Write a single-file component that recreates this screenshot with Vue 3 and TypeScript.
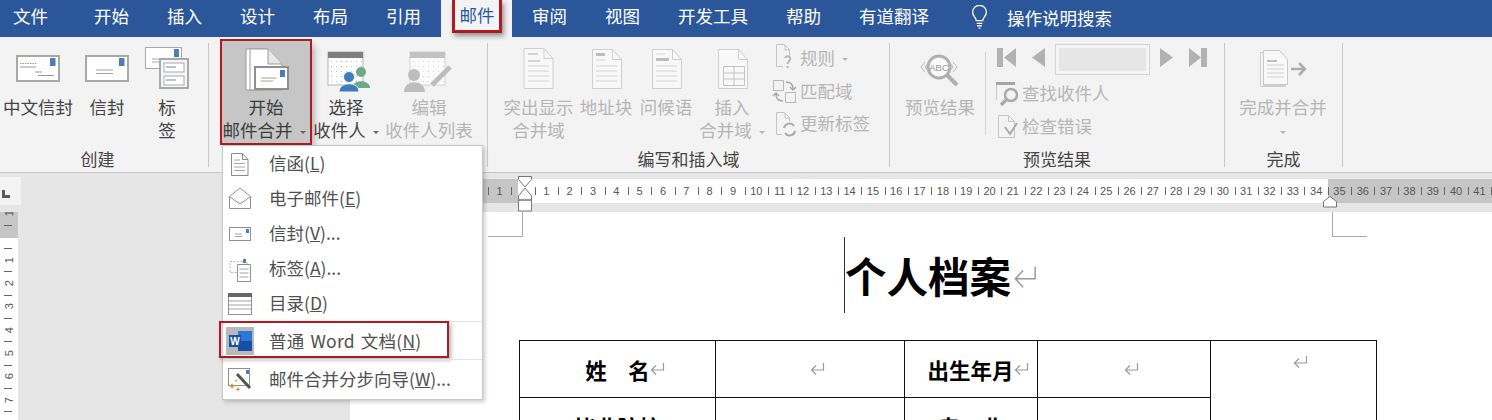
<script setup lang="ts">
const tabs = ['开始', '插入', '设计', '布局', '引用']
const tabs2 = ['审阅', '视图', '开发工具', '帮助', '有道翻译']
const hLabels: string[] = ['1', '']
for (let i = 1; i <= 41; i++) hLabels.push(String(i))
hLabels.push('')
const vLabels: string[] = ['1', '', '1', '2', '3', '4', '5', '6', '7', '8']
const dots: { x: number; y: number }[] = []
for (let r = 0; r < 5; r++) for (let c = 0; c < 7; c++) dots.push({ x: c * 5, y: r * 5 })
</script>

<template>
  <div class="app">
    <div class="tabs">
      <div class="tab first">文件</div>
      <div v-for="t in tabs" :key="t" class="tab">{{ t }}</div>
      <div class="tab active"><span class="redtab">邮件</span></div>
      <div v-for="t in tabs2" :key="t" class="tab">{{ t }}</div>
      <svg class="bulb" width="17" height="24" viewBox="0 0 18 26" fill="none" stroke="#fff" stroke-width="1.4">
        <path d="M5.5 17c0-3-4-5-4-9.300a7.500 7.300 0 0 1 15 0c0 4.300-4 6.300-4 9.300z" />
        <path d="M6 20h6M6.500 22.500h5M8 25h2" />
      </svg>
      <div class="search">操作说明搜索</div>
    </div>

    <div class="ribbon">
      <div class="group g1">
        <div class="body">
          <div class="btn w76">
            <svg width="76" height="54" viewBox="0 41 76 54">
              <rect x="17" y="56" width="42" height="25" fill="#fff" stroke="#a9a9a9" stroke-width="2" />
              <rect x="50" y="58" width="5.500" height="8" fill="#4a7ebb" />
              <path d="M20 63.500h17" stroke="#c98a7a" stroke-dasharray="1.500 1" />
              <path d="M20 67h16M35 72h7M38 75.500h16" stroke="#9a9a9a" />
            </svg>
            <div class="t">中文信封</div>
          </div>
          <div class="btn w62">
            <svg width="62" height="54" viewBox="76 41 62 54">
              <rect x="86" y="56" width="42" height="25" fill="#fff" stroke="#a9a9a9" stroke-width="2" />
              <rect x="119" y="58" width="5.500" height="8" fill="#4a7ebb" />
              <path d="M96 70h17M96 73.500h17" stroke="#a5a5a5" />
            </svg>
            <div class="t">信封</div>
          </div>
          <div class="btn w58">
            <svg width="58" height="54" viewBox="138 41 58 54">
              <rect x="145.500" y="47.500" width="36" height="21" fill="#fff" stroke="#a9a9a9" />
              <rect x="174" y="49" width="5" height="8" fill="#4a7ebb" />
              <path d="M152 59h8M152 62h8" stroke="#aaa" />
              <rect x="160" y="59" width="28" height="29" fill="#f6f6f6" stroke="#a9a9a9" stroke-width="2" />
              <rect x="164" y="63" width="20" height="9" fill="#fff" stroke="#a9a9a9" />
              <rect x="164" y="76" width="20" height="9" fill="#fff" stroke="#a9a9a9" />
              <path d="M166 67h10M166 80h10" stroke="#5b8cc4" />
            </svg>
            <div class="t">标<br />签</div>
          </div>
        </div>
        <div class="label pr13">创建</div>
      </div>
      <div class="sep"></div>

      <div class="group g2">
        <div class="body pl13">
          <div class="btn w88 pressed">
            <svg width="88" height="54" viewBox="222 41 88 54">
              <path d="M246 49h18v41h-18z" fill="#fff" stroke="#9b9b9b" />
              <path d="M250 49h18l14 15v26h-32z" fill="#fff" stroke="#9b9b9b" />
              <path d="M268 49v15h14" fill="#e8e8e8" stroke="#9b9b9b" />
              <rect x="255" y="67" width="33" height="22" fill="#fff" stroke="#8f8f8f" stroke-width="2" />
              <rect x="280" y="70" width="5" height="7" fill="#4a7ebb" />
              <path d="M261 78h15M261 81h12" stroke="#b99a84" />
            </svg>
            <div class="t">开始</div>
            <div class="t">邮件合并<i class="caret shifted"></i></div>
          </div>
          <div class="btn w72">
            <svg width="72" height="54" viewBox="310 41 72 54">
              <rect x="328" y="52" width="35" height="33" fill="#fff" stroke="#b5b5b5" />
              <rect x="328" y="52" width="35" height="6" fill="#7f7f7f" />
              <g fill="#b9b9b9">
                <rect v-for="d in dots" :key="d.x + '-' + d.y" :x="331 + d.x" :y="61 + d.y" width="1" height="1" />
              </g>
              <circle cx="361" cy="72" r="5" fill="#6ea98c" />
              <path d="M352 88c0-9 18-9 18 0z" fill="#6ea98c" />
              <circle cx="349" cy="77" r="5.500" fill="#3e7cbd" stroke="#f3f3f3" />
              <path d="M339 92c0-11 20-11 20 0z" fill="#3e7cbd" stroke="#f3f3f3" />
            </svg>
            <div class="t">选择</div>
            <div class="t">收件人<i class="caret"></i></div>
          </div>
          <div class="btn w94 off">
            <svg width="94" height="54" viewBox="382 41 94 54">
              <rect x="410" y="52" width="35" height="33" fill="#fbfbfb" stroke="#d6d6d6" />
              <rect x="410" y="52" width="35" height="6" fill="#c2c2c2" />
              <g fill="#d6d6d6">
                <rect v-for="d in dots" :key="d.x + '_' + d.y" :x="413 + d.x" :y="61 + d.y" width="1" height="1" />
              </g>
              <circle cx="414" cy="75" r="6" fill="#bdbdbd" />
              <path d="M404 92c0-13 21-13 21 0z" fill="#bdbdbd" />
              <path d="M432 85l18-18" stroke="#bdbdbd" stroke-width="5" />
            </svg>
            <div class="t">编辑</div>
            <div class="t">收件人列表</div>
          </div>
        </div>
        <div class="label"></div>
      </div>
      <div class="sep"></div>

      <div class="group g3">
        <div class="body pl13">
          <div class="btn w75 off">
            <svg width="75" height="54" viewBox="501 41 75 54">
              <path d="M524 48.500h20l9 10v30h-29z" fill="#f8f8f8" stroke="#cfcfcf" />
              <path d="M544 48.500v10h9" fill="none" stroke="#cfcfcf" />
              <path d="M528 53h10v2h-10z" fill="#d5d5d5" />
              <path d="M528 60h12v2h-12z" fill="#d5d5d5" />
              <path d="M528 66h21M528 71h21M528 76h21M528 81h21" stroke="#d5d5d5" />
            </svg>
            <div class="t">突出显示</div>
            <div class="t">合并域</div>
          </div>
          <div class="btn w60 off">
            <svg width="60" height="54" viewBox="576 41 60 54">
              <path d="M592.500 49.500h20l9 10v29h-29z" fill="#f8f8f8" stroke="#cfcfcf" />
              <path d="M612.500 49.500v10h9" fill="none" stroke="#cfcfcf" />
              <rect x="596" y="53" width="9" height="3" fill="#bdbdbd" />
              <path d="M596 60h9M596 66h21M596 71h21M596 76h21M596 81h21" stroke="#d5d5d5" />
            </svg>
            <div class="t">地址块</div>
          </div>
          <div class="btn w60 off">
            <svg width="60" height="54" viewBox="636 41 60 54">
              <path d="M652.500 49.500h20l9 10v29h-29z" fill="#f8f8f8" stroke="#cfcfcf" />
              <path d="M672.500 49.500v10h9" fill="none" stroke="#cfcfcf" />
              <path d="M656 54h9" stroke="#d5d5d5" />
              <rect x="656" y="58" width="13" height="3" fill="#bdbdbd" />
              <path d="M656 66h21M656 71h21M656 76h21M656 81h21" stroke="#d5d5d5" />
            </svg>
            <div class="t">问候语</div>
          </div>
          <div class="btn w72 off">
            <svg width="72" height="54" viewBox="696 41 72 54">
              <path d="M718.500 49.500h20l9 10v29h-29z" fill="#f8f8f8" stroke="#cfcfcf" />
              <path d="M738.500 49.500v10h9" fill="none" stroke="#cfcfcf" />
              <path d="M723.500 66.500h21v19h-21zM723.500 73h21M723.500 79h21M734 66.500v19" fill="none" stroke="#c4c4c4" />
            </svg>
            <div class="t">插入</div>
            <div class="t">合并域<i class="caret"></i></div>
          </div>
          <div class="smallcol off">
            <div class="srow">
              <svg width="32" height="32" viewBox="768 43 32 32" fill="none" stroke="#c4c4c4">
                <path d="M783 66.500h-6.500v-22h8l5 5v8M785 45v5h5" />
                <path d="M785 58c1-3 6-2 5 1.500-.5 2-2.500 2-2.500 4.500M787.500 66v2" stroke="#b8b8b8" stroke-width="2" />
              </svg>
              <span>规则</span><i class="caret"></i>
            </div>
            <div class="srow">
              <svg width="32" height="32" viewBox="768 75 32 32" fill="none" stroke="#bbb">
                <rect x="773.500" y="79.500" width="10" height="10" />
                <rect x="785.500" y="91.500" width="10" height="10" />
                <path d="M786 81c4 0 7 2 7 7M790 86l3 3 3-3M783 100c-4 0-7-2-7-7M773 95l3-3 3 3" stroke="#aaa" stroke-width="1.500" />
              </svg>
              <span>匹配域</span>
            </div>
            <div class="srow">
              <svg width="32" height="32" viewBox="768 108 32 32" fill="none" stroke="#c4c4c4">
                <path d="M782 134.500h-5.500v-22h8l5 5v4M785 113v5h5" />
                <path d="M784 128a5.500 5.500 0 0 1 10-2M795 131a5.500 5.500 0 0 1-10 2" stroke="#aaa" stroke-width="2" />
              </svg>
              <span>更新标签</span>
            </div>
          </div>
        </div>
        <div class="label">编写和插入域</div>
      </div>
      <div class="sep"></div>

      <div class="group g4">
        <div class="body pl10">
          <div class="btn w80 off">
            <svg width="80" height="54" viewBox="900 41 80 54">
              <circle cx="939" cy="67" r="11" fill="#fafafa" stroke="#b0b0b0" stroke-width="3" />
              <path d="M947 75l10 10" stroke="#b0b0b0" stroke-width="4" />
              <path d="M925 62l-4 5 4 5M929 62l-4 5 4 5M949 62l4 5-4 5M953 62l4 5-4 5" fill="none" stroke="#b9b9b9" />
              <text x="939" y="70.500" text-anchor="middle" class="abc">ABC</text>
            </svg>
            <div class="t">预览结果</div>
          </div>
          <div class="innersep"></div>
          <div class="navcol off">
            <div class="nav">
              <svg width="62" height="36" viewBox="990 41 62 36" fill="#b2b2b2">
                <rect x="997" y="48" width="6" height="19" />
                <path d="M1016 48v19l-12-9.500zM1045 48v19l-13-9.500z" />
              </svg>
              <div class="field"></div>
              <svg width="62" height="36" viewBox="1153 41 62 36" fill="#b2b2b2">
                <path d="M1160 48v19l13-9.500zM1189 48v19l12-9.500z" />
                <rect x="1201" y="48" width="6" height="19" />
              </svg>
            </div>
            <div class="nrow r34">
              <svg width="32" height="34" viewBox="990 77 32 34" fill="none">
                <path d="M996.500 85v15" stroke="#c9c9c9" />
                <rect x="996" y="82" width="19" height="3" fill="#a5a5a5" />
                <circle cx="1011" cy="95" r="6" stroke="#aaa" stroke-width="2.500" />
                <path d="M1006 100l-5 5" stroke="#aaa" stroke-width="3.500" />
              </svg>
              <span>查找收件人</span>
            </div>
            <div class="nrow r32">
              <svg width="32" height="32" viewBox="990 111 32 32" fill="none" stroke="#c4c4c4">
                <path d="M998.500 115.500h10l6 6v16h-16zM1008.500 115.500v6h6" />
                <path d="M1005 127l5 7 7-11" stroke="#aaa" stroke-width="2" />
              </svg>
              <span>检查错误</span>
            </div>
          </div>
        </div>
        <div class="label">预览结果</div>
      </div>
      <div class="sep"></div>

      <div class="group g5">
        <div class="body pl7">
          <div class="btn w102 off">
            <svg width="102" height="54" viewBox="1232 41 102 54">
              <path d="M1260.500 52.500h3v33h22v1h-25z" fill="#f5f5f5" stroke="#cfcfcf" />
              <path d="M1263.500 50.500h16l8 9v25h-24z" fill="#f8f8f8" stroke="#c9c9c9" />
              <rect x="1267" y="60" width="10" height="2" fill="#bdbdbd" />
              <path d="M1267 65h17M1267 69h17M1267 73h17M1267 77h17" stroke="#d0d0d0" />
              <path d="M1291 69h13M1299 63l6 6-6 6" fill="none" stroke="#adadad" stroke-width="2.500" />
            </svg>
            <div class="t">完成并合并</div>
            <div class="t"><i class="caret alone"></i></div>
          </div>
        </div>
        <div class="label">完成</div>
      </div>
      <div class="sep"></div>
    </div>

    <div class="lower">
      <div class="leftcol">
        <div class="corner"><i class="lmark"></i></div>
        <div class="vruler">
          <div class="vcells">
            <div v-for="(n, i) in vLabels" :key="i" class="vcell"><span>{{ n }}</span></div>
          </div>
        </div>
      </div>

      <div class="docol">
        <div class="band">
          <div class="ruler">
            <div v-for="(n, i) in hLabels" :key="i" class="hcell">{{ n }}</div>
          </div>
          <svg class="marker ml" width="16" height="36" viewBox="0 0 16 36" fill="#fff" stroke="#777">
            <path d="M1.500 .5h13v3L8 11 1.500 3.500z" />
            <path d="M8 12l6.500 8v4h-13v-4zM1.500 24h13v11h-13z" />
          </svg>
          <svg class="marker mr" width="16" height="12" viewBox="0 0 16 12" fill="#fff" stroke="#777">
            <path d="M8 .5l6.500 5v5.500h-13v-5.500z" />
          </svg>
        </div>
        <div class="page">
          <div class="crops"><i class="crop cl"></i><i class="crop cr"></i></div>
          <div class="titlerow">
            <i class="cursor"></i>
            <span class="title">个人档案</span>
            <svg class="retbig" width="24" height="24" viewBox="0 0 26 24" fill="none" stroke="#9a9a9a" stroke-width="1.600">
              <path d="M24 1v13H3M11 5l-8.500 9 8.500 9" />
            </svg>
          </div>
          <table class="tbl">
            <colgroup>
              <col class="c1" /><col class="c2" /><col class="c3" /><col class="c4" /><col class="c5" />
            </colgroup>
            <tbody>
              <tr>
                <th class="pad15">姓　名<svg class="ret" width="15" height="14" viewBox="0 0 15 14"><path d="M13.500 1v7H2M6 3.500 1.500 8 6 12.500" /></svg></th>
                <td class="pad14"><svg class="ret" width="15" height="14" viewBox="0 0 15 14"><path d="M13.500 1v7H2M6 3.500 1.500 8 6 12.500" /></svg></td>
                <th class="pad14">出生年月<svg class="ret" width="15" height="14" viewBox="0 0 15 14"><path d="M13.500 1v7H2M6 3.500 1.500 8 6 12.500" /></svg></th>
                <td class="pad14"><svg class="ret" width="15" height="14" viewBox="0 0 15 14"><path d="M13.500 1v7H2M6 3.500 1.500 8 6 12.500" /></svg></td>
                <td rowspan="2" class="photo"><svg class="ret" width="15" height="14" viewBox="0 0 15 14"><path d="M13.500 1v7H2M6 3.500 1.500 8 6 12.500" /></svg></td>
              </tr>
              <tr>
                <th>毕业院校</th>
                <td></td>
                <th>专　业</th>
                <td></td>
              </tr>
            </tbody>
          </table>
        </div>
      </div>
    </div>

    <div class="menu">
      <div class="item">
        <svg width="28" height="28" viewBox="0 0 28 28" fill="none" stroke="#8a8a8a">
          <path d="M5.500 3.500h11l5.500 6v16h-16.500zM16.500 3.500v6h5.500" fill="#fff" />
          <path d="M8 10h6M8 13.500h11M8 17h11M8 20.500h11" stroke="#a5a5a5" />
        </svg>
        <span>信函(<u>L</u>)</span>
      </div>
      <div class="item">
        <svg width="28" height="28" viewBox="0 0 28 28" fill="#fff" stroke="#8f8f8f">
          <path d="M3.500 11.500L14 3l10.500 8.500v12h-21z" />
          <path d="M3.500 11.500L14 19l10.500-7.500" />
        </svg>
        <span>电子邮件(<u>E</u>)</span>
      </div>
      <div class="item">
        <svg width="28" height="28" viewBox="0 0 28 28" fill="#fff" stroke="#8f8f8f">
          <rect x="3.500" y="7.500" width="21" height="13" />
          <rect x="20" y="9" width="3" height="4" fill="#4a7ebb" stroke="none" />
          <path d="M9 14h7M9 16.500h7" stroke="#a5a5a5" />
        </svg>
        <span>信封(<u>V</u>)...</span>
      </div>
      <div class="item">
        <svg width="28" height="28" viewBox="0 0 28 28" fill="#fff" stroke="#8f8f8f">
          <path d="M4 6.500h17v11H4z" stroke="#b5b5b5" stroke-dasharray="2 1.500" />
          <path d="M11.500 9.500h13v17h-13z" />
          <rect x="17" y="4" width="3" height="4" fill="#4a7ebb" stroke="none" />
          <path d="M13.500 14h9M13.500 18h9M13.500 22h9" stroke="#a5a5a5" />
        </svg>
        <span>标签(<u>A</u>)...</span>
      </div>
      <div class="item">
        <svg width="28" height="28" viewBox="0 0 28 28" fill="#fff" stroke="#8f8f8f">
          <rect x="2.500" y="3.500" width="23" height="21" />
          <rect x="2" y="3" width="24" height="4" fill="#666" stroke="none" />
          <path d="M3 11h22M3 15h22M3 19h22" stroke="#a5a5a5" />
        </svg>
        <span>目录(<u>D</u>)</span>
      </div>
      <div class="item tall divided">
        <svg width="28" height="28" viewBox="0 0 28 28">
          <rect width="28" height="28" fill="#b9b9b9" />
          <rect x="12" y="4" width="14" height="20" fill="#2a78d4" />
          <rect x="12" y="14" width="14" height="10" fill="#1650a5" />
          <rect x="3" y="8" width="12" height="12" fill="#1d4fa6" />
          <text x="9" y="17.500" text-anchor="middle" class="wordw">W</text>
        </svg>
        <span class="wide">普通 Word 文档(<u>N</u>)</span>
        <i class="redbox"></i>
      </div>
      <div class="item tall divided">
        <svg width="28" height="28" viewBox="0 0 28 28" fill="#fff" stroke="#8f8f8f">
          <rect x="2.500" y="3.500" width="21" height="17" />
          <rect x="20" y="5" width="3" height="4" fill="#4a7ebb" stroke="none" />
          <path d="M11 9l13 14" stroke="#555" stroke-width="3" />
          <path d="M6 18l1 2 2 1-2 1-1 2-1-2-2-1 2-1zM12 22l.7 1.500 1.500.7-1.500.7-.7 1.500-.7-1.500-1.500-.7 1.500-.7zM10 14l.5 1.200 1.200.5-1.200.5-.5 1.200-.5-1.200-1.200-.5 1.200-.5z" fill="#e2893a" stroke="none" />
        </svg>
        <span>邮件合并分步向导(<u>W</u>)...</span>
      </div>
    </div>
  </div>
</template>

<style scoped>
.app {
  position: relative;
  width: 1492px;
  height: 420px;
  overflow: hidden;
  background: #e6e6e6;
  font-family: "Noto Sans CJK SC", "Liberation Sans", sans-serif;
  font-size: 17.5px;
  color: #444;
}
.tabs {
  display: flex;
  align-items: center;
  height: 37px;
  background: #2b579a;
  color: #fff;
}
.tab {
  padding: 0 19px;
  line-height: 31px;
  height: 37px;
  white-space: nowrap;
}
.tab.first {
  padding: 0 27px 0 13px;
}
.tab.active {
  width: 71px;
  padding: 0;
  background: #f3f3f3;
  box-sizing: border-box;
  padding-left: 11px;
  margin-left: 1px;
  margin-right: 1px;
  color: #2b579a;
}
.redtab {
  display: block;
  width: 50px;
  height: 33px;
  box-sizing: border-box;
  border: 3px solid #b01a22;
  border-top: 0;
  text-align: center;
  line-height: 29px;
  box-shadow: 2px 3px 5px rgba(0, 0, 0, 0.4);
}
.bulb {
  margin: 0 0 3px 23px;
  flex: none;
}
.search {
  margin: 0 0 3px 19px;
  white-space: nowrap;
}
.ribbon {
  display: flex;
  height: 136px;
  box-sizing: border-box;
  background: #f3f3f3;
  border-bottom: 1px solid #c8c8c8;
}
.sep {
  width: 1px;
  height: 124px;
  margin-top: 6px;
  background: #c9c9c9;
}
.group {
  display: flex;
  flex-direction: column;
  padding-top: 4px;
  flex: none;
}
.g1 { width: 208px; }
.g2 { width: 278px; }
.g3 { width: 401px; }
.g4 { width: 334px; }
.g5 { width: 117px; }
.body {
  display: flex;
  height: 102px;
}
.pl13 { padding-left: 13px; }
.pl10 { padding-left: 10px; }
.pl7 { padding-left: 7px; }
.label {
  margin-top: 4px;
  height: 23px;
  line-height: 23px;
  text-align: center;
  font-size: 17px;
}
.pr13 { padding-right: 13px; }
.btn {
  flex: none;
  text-align: center;
  white-space: nowrap;
}
.btn svg { display: block; }
.t {
  line-height: 23px;
  height: 23px;
}
.w58 { width: 58px; }
.w60 { width: 60px; }
.w62 { width: 62px; }
.w72 { width: 72px; }
.w75 { width: 75px; }
.w76 { width: 76px; }
.w80 { width: 80px; }
.w88 { width: 88px; }
.w94 { width: 94px; }
.w102 { width: 102px; }
.off { color: #b6b6b6; }
.pressed {
  background: #c6c6c6;
  outline: 2.5px solid #b01a22;
  outline-offset: 0;
  box-shadow: 4px 4px 7px rgba(0, 0, 0, 0.3);
  color: #3c3c3c;
}
.caret {
  display: inline-block;
  width: 0;
  height: 0;
  margin-left: 7px;
  vertical-align: middle;
  border-left: 3px solid transparent;
  border-right: 3px solid transparent;
  border-top: 3px solid #6a6a6a;
}
.caret.shifted { margin-right: 4px; }
.off .caret { border-top-color: #b6b6b6; }
.caret.alone { margin-left: 0; }
.smallcol {
  margin-top: 2px;
  flex: none;
}
.srow {
  display: flex;
  align-items: center;
  height: 32.500px;
  white-space: nowrap;
}
.srow span,
.nrow span {
  margin-bottom: 3px;
}
.innersep {
  width: 1px;
  height: 83px;
  margin: 11px 4px 0 5px;
  background: #d5d5d5;
}
.nav {
  display: flex;
  height: 36px;
}
.field {
  width: 93px;
  height: 29px;
  margin: 4px 4px 0;
  box-sizing: border-box;
  background: #e6e6e6;
  border: 3px solid #f5f5f5;
  outline: 1px solid #d4d4d4;
  outline-offset: 0;
}
.nrow {
  display: flex;
  align-items: center;
  white-space: nowrap;
}
.r34 { height: 34px; }
.r32 { height: 32px; }
.abc {
  font-family: "Liberation Sans", sans-serif;
  font-size: 9.500px;
  fill: #969696;
}
.lower {
  display: flex;
  height: 247px;
}
.leftcol {
  width: 350px;
  flex: none;
  padding-top: 4px;
}
.corner {
  display: flex;
  align-items: flex-end;
  width: 21px;
  height: 28px;
  padding: 0 0 7px 2px;
  box-sizing: border-box;
  background: #f3f3f3;
}
.lmark {
  width: 8px;
  height: 8px;
  box-sizing: border-box;
  border-left: 3px solid #5a5a5a;
  border-bottom: 3px solid #5a5a5a;
}
.vruler {
  width: 18px;
  height: 208px;
  margin-top: 7px;
  overflow: hidden;
  background: linear-gradient(180deg, #c6c6c6 26px, #fff 26px);
}
.vcells {
  margin-top: -10.700px;
}
.vcell {
  display: flex;
  align-items: center;
  justify-content: center;
  height: 23.330px;
  background: linear-gradient(#666, #666) no-repeat 4px 0 / 8px 1px;
}
.vcell span {
  font-family: "Liberation Sans", sans-serif;
  font-size: 11px;
  line-height: 12px;
  color: #555;
  writing-mode: vertical-rl;
  transform: rotate(180deg);
}
.docol {
  position: relative;
  flex: 1;
  min-width: 0;
  display: flex;
  flex-direction: column;
}
.band {
  padding: 6px 0 9px;
  background: #e6e6e6;
}
.ruler {
  display: flex;
  height: 24px;
  padding-left: 138px;
  background: linear-gradient(90deg, #c6c6c6 168px, #fff 168px, #fff 978px, #c6c6c6 978px);
  overflow: hidden;
}
.hcell {
  flex: none;
  width: 23.330px;
  text-align: center;
  font-family: "Liberation Sans", sans-serif;
  font-size: 11px;
  line-height: 24px;
  color: #555;
  background: linear-gradient(#666, #666) no-repeat 0 center / 1px 8px;
}
.marker {
  position: absolute;
}
.ml {
  left: 167px;
  top: 3px;
}
.mr {
  left: 972px;
  top: 23px;
}
.page {
  flex: 1;
  background: #fff;
  overflow: hidden;
}
.crops {
  display: flex;
  height: 25px;
}
.crop {
  display: block;
  width: 35px;
  box-sizing: border-box;
  border-bottom: 1px solid #a8a8a8;
}
.cl {
  margin-left: 138px;
  border-right: 1px solid #a8a8a8;
}
.cr {
  margin-left: 809px;
  border-left: 1px solid #a8a8a8;
}
.titlerow {
  display: flex;
  align-items: center;
  height: 76px;
  margin-left: 494px;
}
.cursor {
  width: 1px;
  height: 76px;
  background: #333;
}
.title {
  font-size: 41.500px;
  font-weight: 700;
  color: #000;
  white-space: nowrap;
}
.retbig {
  margin: 4px 0 0 2px;
}
.tbl {
  width: 857px;
  margin: 27px 0 0 169px;
  border-collapse: collapse;
  table-layout: fixed;
  color: #000;
}
.c1 { width: 196px; }
.c2 { width: 189px; }
.c3 { width: 133px; }
.c4 { width: 173px; }
.c5 { width: 166px; }
.tbl th,
.tbl td {
  height: 56px;
  padding: 0;
  border: 1px solid #111;
  text-align: center;
  font-size: 21.500px;
  font-weight: 700;
}
.tbl .pad15 { padding-left: 15px; }
.tbl .pad14 { padding-left: 14px; }
.tbl .photo {
  vertical-align: top;
  padding: 14px 0 0 14px;
  font-size: 0;
  line-height: 0;
}
.ret {
  vertical-align: middle;
  margin-bottom: 8px;
  fill: none;
  stroke: #9a9a9a;
  stroke-width: 1.200;
}
.photo .ret {
  vertical-align: top;
  margin-bottom: 0;
}
.menu {
  position: absolute;
  left: 222px;
  top: 145px;
  width: 261px;
  height: 255px;
  box-sizing: border-box;
  background: #fff;
  border: 1px solid #c8c8c8;
  box-shadow: 2px 2px 4px rgba(0, 0, 0, 0.2);
  color: #505050;
}
.item {
  position: relative;
  display: flex;
  align-items: center;
  height: 35px;
  white-space: nowrap;
}
.item svg {
  flex: none;
  margin: 0 15px 0 3px;
}
.item span {
  margin-bottom: 2px;
}
.item.tall {
  height: 38px;
}
.item.tall span {
  margin-bottom: 0;
}
.item span.wide {
  word-spacing: 2px;
  letter-spacing: 0.2px;
}
.item.divided {
  box-sizing: border-box;
  border-top: 1px solid #e2e2e2;
}
.wordw {
  font-family: "Liberation Sans", sans-serif;
  font-size: 10px;
  font-weight: 700;
  fill: #fff;
}
.redbox {
  position: absolute;
  left: -4px;
  top: -1px;
  width: 230px;
  height: 37px;
  box-sizing: border-box;
  border: 2.500px solid #b01a22;
  box-shadow: 2px 2px 4px rgba(0, 0, 0, 0.3);
}
</style>
